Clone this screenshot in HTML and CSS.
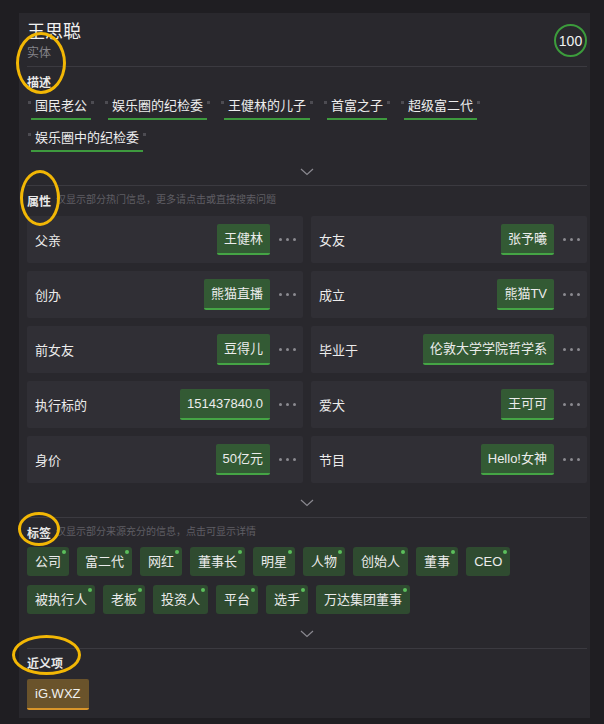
FILE: index.html
```html
<!DOCTYPE html>
<html lang="zh">
<head>
    <meta charset="UTF-8">
    <title>王思聪</title>
    <link rel="stylesheet" href="styles.css">
</head>
<body>
    <div class="panel">
        <!-- 头部 -->
        <div class="header">
            <div>
                <div class="name">王思聪</div>
                <div class="type">实体</div>
            </div>
            <div class="score">100</div>
        </div>

        <!-- 描述 -->
        <div class="section first">
            <div class="section-title">描述</div>
            <div class="desc-list">
                <span class="desc">国民老公</span>
                <span class="desc">娱乐圈的纪检委</span>
                <span class="desc">王健林的儿子</span>
                <span class="desc">首富之子</span>
                <span class="desc">超级富二代</span>
                <span class="desc">娱乐圈中的纪检委</span>
            </div>
            <div class="more"><svg width="14" height="8" viewBox="0 0 14 8"><path d="M1 1 L7 6.5 L13 1" fill="none" stroke="#8a8990" stroke-width="1.2"/></svg></div>
        </div>

        <!-- 属性 -->
        <div class="section">
            <div class="section-title">属性<span class="note">仅显示部分热门信息，更多请点击或直接搜索问题</span></div>
            <div class="attr-grid">
                <div class="attr"><span class="label">父亲</span><span class="value">王健林</span><span class="dots"><i></i><i></i><i></i></span></div>
                <div class="attr"><span class="label">女友</span><span class="value">张予曦</span><span class="dots"><i></i><i></i><i></i></span></div>
                <div class="attr"><span class="label">创办</span><span class="value">熊猫直播</span><span class="dots"><i></i><i></i><i></i></span></div>
                <div class="attr"><span class="label">成立</span><span class="value">熊猫TV</span><span class="dots"><i></i><i></i><i></i></span></div>
                <div class="attr"><span class="label">前女友</span><span class="value">豆得儿</span><span class="dots"><i></i><i></i><i></i></span></div>
                <div class="attr"><span class="label">毕业于</span><span class="value">伦敦大学学院哲学系</span><span class="dots"><i></i><i></i><i></i></span></div>
                <div class="attr"><span class="label">执行标的</span><span class="value">151437840.0</span><span class="dots"><i></i><i></i><i></i></span></div>
                <div class="attr"><span class="label">爱犬</span><span class="value">王可可</span><span class="dots"><i></i><i></i><i></i></span></div>
                <div class="attr"><span class="label">身价</span><span class="value">50亿元</span><span class="dots"><i></i><i></i><i></i></span></div>
                <div class="attr"><span class="label">节目</span><span class="value">Hello!女神</span><span class="dots"><i></i><i></i><i></i></span></div>
            </div>
            <div class="more"><svg width="14" height="8" viewBox="0 0 14 8"><path d="M1 1 L7 6.5 L13 1" fill="none" stroke="#8a8990" stroke-width="1.2"/></svg></div>
        </div>

        <!-- 标签 -->
        <div class="section">
            <div class="section-title">标签<span class="note">仅显示部分来源充分的信息，点击可显示详情</span></div>
            <div class="tag-list">
                <span class="tag">公司</span>
                <span class="tag">富二代</span>
                <span class="tag">网红</span>
                <span class="tag">董事长</span>
                <span class="tag">明星</span>
                <span class="tag">人物</span>
                <span class="tag">创始人</span>
                <span class="tag">董事</span>
                <span class="tag">CEO</span>
                <span class="tag">被执行人</span>
                <span class="tag">老板</span>
                <span class="tag">投资人</span>
                <span class="tag">平台</span>
                <span class="tag">选手</span>
                <span class="tag">万达集团董事</span>
            </div>
            <div class="more"><svg width="14" height="8" viewBox="0 0 14 8"><path d="M1 1 L7 6.5 L13 1" fill="none" stroke="#8a8990" stroke-width="1.2"/></svg></div>
        </div>

        <!-- 近义项 -->
        <div class="section last">
            <div class="section-title">近义项</div>
            <div class="synonym">iG.WXZ</div>
        </div>
    </div>

    <!-- 标注圈 -->
    <div class="mark mark-1"></div>
    <div class="mark mark-2"></div>
    <div class="mark mark-3"></div>
    <div class="mark mark-4"></div>
</body>
</html>
```

FILE: styles.css
```css
body {
    margin: 0;
    background-color: #1f1e22;
    font-family: "Liberation Sans", "Noto Sans CJK SC", sans-serif;
    color: #e6e6e6;
    position: relative;
    height: 724px;
    overflow: hidden;
}

.panel {
    margin: 13px 14px 0 19px;
    background-color: #29282d;
    padding: 6px 3px 8px 8px;
}

.header {
    display: flex;
    justify-content: space-between;
    align-items: flex-start;
    padding-bottom: 5px;
}

.name {
    font-size: 18px;
    line-height: 26px;
    color: #f2f2f2;
}

.type {
    font-size: 12px;
    line-height: 16px;
    color: #85848a;
}

.score {
    width: 29px;
    height: 29px;
    margin-top: 5px;
    border: 2px solid #3c9c3c;
    border-radius: 50%;
    display: flex;
    align-items: center;
    justify-content: center;
    font-size: 14px;
    color: #f2f2f2;
}

.section {
    border-top: 1px solid #3b3a40;
    padding-top: 5px;
    padding-bottom: 6px;
}

.section.first {
    padding-bottom: 5px;
}

.section.last {
    padding-top: 4px;
    padding-bottom: 0;
}

.section-title {
    display: flex;
    align-items: center;
    height: 18px;
    font-size: 12px;
    font-weight: bold;
    color: #e8e8e8;
}

.note {
    font-weight: normal;
    font-size: 10px;
    line-height: 12px;
    color: #5f5e64;
    margin-left: 5px;
}

/* 描述 */
.desc-list {
    display: flex;
    flex-wrap: wrap;
    gap: 8px 17px;
    margin-top: 6px;
    padding-left: 4px;
}

.desc {
    position: relative;
    font-size: 13px;
    line-height: 19px;
    padding: 0 4px 3px;
    border-bottom: 2px solid #3e9a3e;
    color: #ededed;
}

.desc::before,
.desc::after {
    content: "";
    position: absolute;
    top: 5px;
    width: 3px;
    height: 3px;
    background: #4d4c52;
}

.desc::before {
    left: -3px;
}

.desc::after {
    right: -3px;
}

.more {
    height: 16px;
    margin-top: 12px;
    display: flex;
    align-items: center;
    justify-content: center;
}

/* 属性 */
.attr-grid {
    display: grid;
    grid-template-columns: 1fr 1fr;
    gap: 8px;
    margin-top: 7px;
}

.attr {
    height: 47px;
    background-color: #302f35;
    border-radius: 2px;
    display: flex;
    align-items: center;
    padding: 0 7px 0 8px;
}

.label {
    flex: 1;
    font-size: 13px;
    color: #ececec;
}

.value {
    font-size: 13px;
    line-height: 29px;
    padding: 0 7px;
    background-color: #335a34;
    border-bottom: 2px solid #45a545;
    border-radius: 2px;
    color: #ececec;
}

.dots {
    display: flex;
    gap: 4px;
    margin-left: 9px;
}

.dots i {
    width: 3px;
    height: 3px;
    border-radius: 50%;
    background: #8b8a90;
}

/* 标签 */
.tag-list {
    display: flex;
    flex-wrap: wrap;
    gap: 9px 8px;
    margin-top: 6px;
    padding-right: 30px;
}

.tag {
    position: relative;
    font-size: 13px;
    line-height: 29px;
    padding: 0 8px;
    background-color: #2f4b30;
    border-radius: 3px;
    color: #ececec;
}

.tag::after {
    content: "";
    position: absolute;
    top: 3px;
    right: 3px;
    width: 4px;
    height: 4px;
    border-radius: 50%;
    background: #5cbf5c;
}

.synonym {
    display: inline-block;
    margin-top: 8px;
    font-size: 13px;
    line-height: 29px;
    padding: 0 8px;
    background-color: #6a532b;
    border-bottom: 2px solid #d9952a;
    border-radius: 2px;
    color: #f0f0f0;
}

/* 标注圈 */
.mark {
    position: absolute;
    border: 3px solid #f2b705;
    border-radius: 50%;
    box-sizing: border-box;
}

.mark-1 {
    left: 16px;
    top: 32px;
    width: 50px;
    height: 62px;
}

.mark-2 {
    left: 20px;
    top: 170px;
    width: 40px;
    height: 56px;
}

.mark-3 {
    left: 18px;
    top: 512px;
    width: 42px;
    height: 34px;
}

.mark-4 {
    left: 12px;
    top: 635px;
    width: 69px;
    height: 40px;
}
```
